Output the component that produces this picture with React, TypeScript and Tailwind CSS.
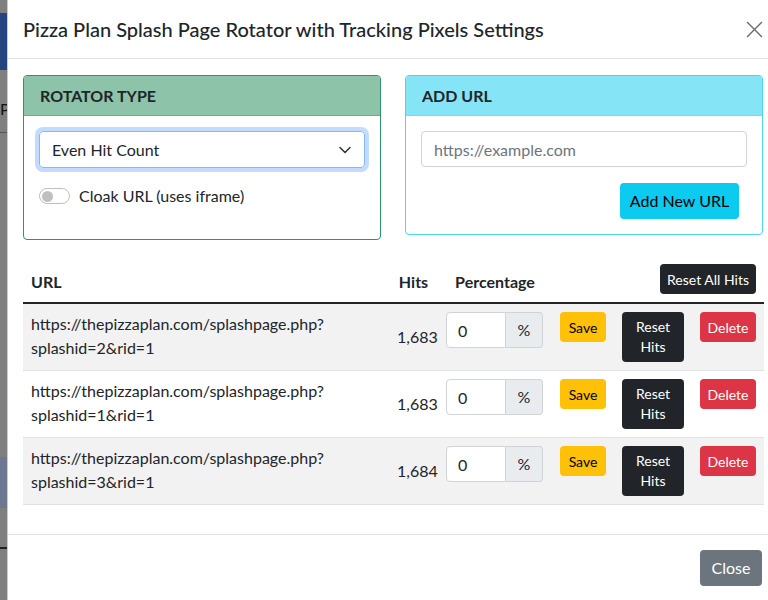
import React from "react";

type Row = { id: number; hits: string };

const rows: Row[] = [
  { id: 2, hits: "1,683" },
  { id: 1, hits: "1,683" },
  { id: 3, hits: "1,684" },
];

function BackdropStrip() {
  // bit of the page behind the dimmed overlay
  return (
    <div className="flex w-[7px] shrink-0 flex-col bg-[#7f7f7f]">
      <div className="h-[13px]" />
      <div className="h-[57px] bg-[#24467f]" />
      <div className="h-[30px]" />
      <div className="h-[18px] text-[16px] leading-[18px] text-[#111]">P</div>
      <div className="h-[14px]" />
      <div className="h-[1px] bg-[#555]" />
      <div className="h-[324px]" />
      <div className="h-[51px] bg-[#6b788f]" />
      <div className="h-[39px]" />
      <div className="h-[2px] bg-[#222]" />
    </div>
  );
}

function CloseX() {
  return (
    <svg width="17" height="17" viewBox="0 0 16 16" className="text-[#6c6c6c]">
      <path d="M1 1 L15 15 M15 1 L1 15" stroke="currentColor" strokeWidth="1.3" />
    </svg>
  );
}

export default function App() {
  return (
    <div className="flex h-[600px] w-[768px] overflow-hidden bg-[#7f7f7f] font-['Lato',sans-serif] text-[16px] text-[#212529]">
      <BackdropStrip />
      <div className="flex w-[771px] shrink-0 flex-col border-l border-black/20 bg-white">
        {/* header */}
        <div className="flex h-[59px] shrink-0 items-center justify-between border-b border-[#dee2e6] pl-[15px] pr-[15px]">
          <h5 className="text-[20px] font-medium leading-[30px]">Pizza Plan Splash Page Rotator with Tracking Pixels Settings</h5>
          <button className="flex h-[17px] w-[17px] items-center justify-center">
            <CloseX />
          </button>
        </div>

        {/* body */}
        <div className="px-[15px] pt-4">
          <div className="grid grid-cols-2 items-start gap-6">
            <div className="rounded-[4px] border border-[#2f9467]">
              <div className="flex h-[40px] items-center rounded-t-[3px] border-b border-[#2f9467]/40 bg-[#8cc3a9] px-4 font-bold">ROTATOR TYPE</div>
              <div className="p-[15px]">
                <div className="flex h-[37px] items-center justify-between rounded-[4px] border border-[#86b7fe] pl-3 pr-[13px] shadow-[0_0_0_4px_rgba(13,110,253,0.25)]">
                  <span>Even Hit Count</span>
                  <svg width="12" height="8" viewBox="0 0 12 8">
                    <path d="M1 1.5 L6 6.5 L11 1.5" fill="none" stroke="#343a40" strokeWidth="1.6" strokeLinecap="round" strokeLinejoin="round" />
                  </svg>
                </div>
                <label className="mt-4 mb-4 flex h-[24px] items-center gap-2">
                  <span className="flex h-[16px] w-[31px] items-center rounded-full border border-black/25 px-[2px]">
                    <span className="h-[11px] w-[11px] rounded-full bg-black/25" />
                  </span>
                  <span className="ml-[1px]">Cloak URL (uses iframe)</span>
                </label>
              </div>
            </div>

            <div className="rounded-[4px] border border-[#4cd5f1]">
              <div className="flex h-[40px] items-center rounded-t-[3px] border-b border-[#4cd5f1]/40 bg-[#86e4f7] px-4 font-bold">ADD URL</div>
              <div className="p-[15px]">
                <input
                  className="block h-[36px] w-full rounded-[4px] border border-[#ced4da] px-3 outline-none placeholder:text-[#6c757d]"
                  placeholder="https://example.com"
                />
                <div className="mt-4 flex justify-end pr-2">
                  <button className="h-[36px] w-[119px] rounded-[4px] bg-[#0dcaf0] text-black">Add New URL</button>
                </div>
              </div>
            </div>
          </div>

          <table className="mt-4 w-[741px] table-fixed border-collapse">
            <colgroup>
              <col className="w-[366px]" />
              <col className="w-[49px]" />
              <col className="w-[114px]" />
              <col className="w-[62px]" />
              <col className="w-[78px]" />
              <col className="w-[72px]" />
            </colgroup>
            <thead>
              <tr className="border-b-2 border-[#212529]">
                <th className="p-2 text-left align-bottom font-bold">URL</th>
                <th className="p-2 text-center align-bottom font-bold">Hits</th>
                <th className="p-2 text-center align-bottom font-bold">Percentage</th>
                <th colSpan={3} className="p-2 text-right align-bottom">
                  <button className="h-[30px] w-[96px] rounded-[4px] bg-[#212529] text-[14px] font-normal text-white">Reset All Hits</button>
                </th>
              </tr>
            </thead>
            <tbody>
              {rows.map((r, i) => (
                <tr key={r.id} className={`border-b border-[#dee2e6] ${i % 2 === 0 ? "bg-[#f2f2f2]" : "bg-white"}`}>
                  <td className="p-2 align-top leading-6">
                    <span className="block">https://thepizzaplan.com/splashpage.php?</span>
                    <span className="block">splashid={r.id}&amp;rid=1</span>
                  </td>
                  <td className="p-2 text-center align-middle">{r.hits}</td>
                  <td className="py-2 pl-2 pr-[10px] align-top">
                    <div className="ml-auto mr-auto flex h-[36px] w-[97px]">
                      <input
                        className="h-full w-[60px] rounded-l-[4px] border border-[#ced4da] bg-white px-[11px] outline-none"
                        defaultValue="0"
                      />
                      <span className="flex h-full w-[37px] items-center justify-center rounded-r-[4px] border border-l-0 border-[#ced4da] bg-[#e9ecef]">%</span>
                    </div>
                  </td>
                  <td className="p-2 align-top">
                    <button className="h-[30px] w-[46px] rounded-[4px] bg-[#ffc107] text-[14px] text-black">Save</button>
                  </td>
                  <td className="p-2 align-top">
                    <button className="h-[50px] w-[62px] rounded-[4px] bg-[#212529] text-[14px] leading-[20px] text-white">
                      Reset
                      <br />
                      Hits
                    </button>
                  </td>
                  <td className="p-2 align-top">
                    <button className="h-[30px] w-[56px] rounded-[4px] bg-[#dc3545] text-[14px] text-white">Delete</button>
                  </td>
                </tr>
              ))}
            </tbody>
          </table>
        </div>

        {/* footer */}
        <div className="mt-[29px] flex justify-end border-t border-[#dee2e6] px-4 pt-[15px]">
          <button className="h-[36px] w-[62px] rounded-[4px] bg-[#6c757d] text-white">Close</button>
        </div>
      </div>
    </div>
  );
}
